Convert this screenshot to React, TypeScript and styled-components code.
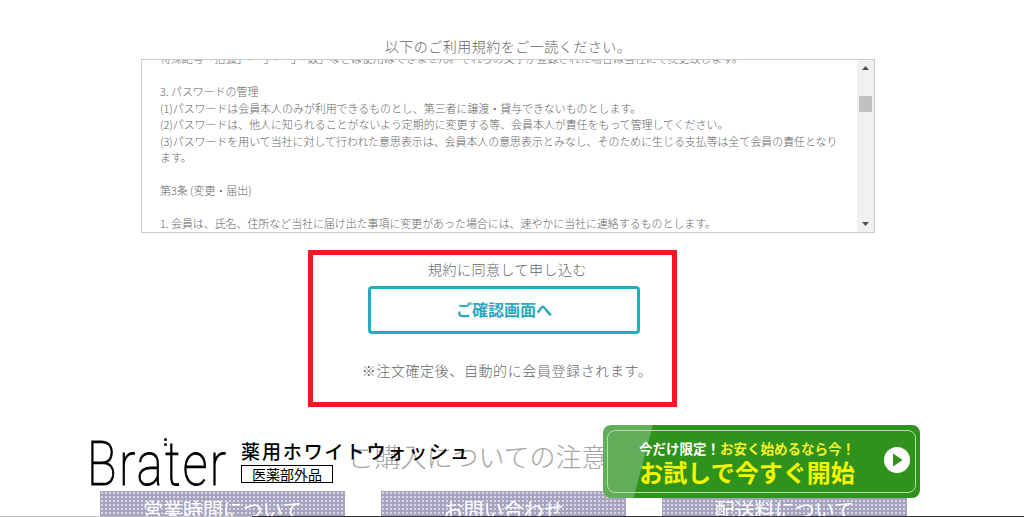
import styled, { createGlobalStyle } from "styled-components";

const GlobalStyle = createGlobalStyle`
    html, body {
        margin: 0;
        height: 517px;
        overflow: hidden;
        background: #fff;
    }
    body {
        font-family: "Noto Sans CJK JP", "Noto Sans", sans-serif;
        color: #666;
    }
`

const Page = styled.div`
    position: relative;
    width: 1024px;
    height: 517px;
    overflow: hidden;
`

const Main = styled.main`
    display: flex;
    flex-direction: column;
    align-items: center;
    width: 1008px;
    padding-top: 36px;
`

const Lead = styled.p`
    margin: 0 0 0 8px;
    height: 23px;
    font-size: 14px;
    font-weight: 300;
    line-height: 21px;
    letter-spacing: 0.5px;
    text-align: center;
`

const TermsBox = styled.div`
    display: flex;
    box-sizing: border-box;
    width: 734px;
    height: 174px;
    margin-left: 8px;
    border: 1px solid #ccc;
    background: #fff;
`

const TermsText = styled.div`
    flex: 1;
    overflow: hidden;
    padding-left: 18px;
    font-size: 10.93px;
    font-weight: 300;
    line-height: 16.5px;
`

const TermsInner = styled.div`
    margin-top: -10px;
`

const TermsLine = styled.div`
    min-height: 16.5px;
    white-space: nowrap;
`

const ScrollBar = styled.div`
    display: flex;
    flex-direction: column;
    align-items: center;
    width: 17px;
    background: #f1f1f1;
`

const ScrollArrow = styled.svg`
    display: block;
    flex: none;
    width: 17px;
    height: 17px;
`

const ScrollTrack = styled.div`
    flex: 1;
    width: 100%;
    padding-top: 19px;
    box-sizing: border-box;
`

const ScrollThumb = styled.div`
    width: 13px;
    height: 16px;
    margin: 0 auto;
    background: #c1c1c1;
`

const Agree = styled.p`
    margin: 26px 0 0 7px;
    font-size: 14px;
    font-weight: 300;
    line-height: 21px;
    letter-spacing: 0.5px;
`

const ConfirmButton = styled.button`
    display: block;
    box-sizing: border-box;
    width: 272px;
    height: 48px;
    margin-top: 6px;
    padding: 0 0 2px;
    border: 3px solid #20aec0;
    border-radius: 4px;
    background: #fff;
    color: #2ea7bd;
    font-family: inherit;
    font-size: 16px;
    font-weight: 700;
`

const Note = styled.p`
    margin: 26px 0 0 6px;
    font-size: 14px;
    font-weight: 300;
    line-height: 21px;
    letter-spacing: 0.6px;
`

const NoticeTitle = styled.h2`
    margin: 53px 0 0;
    height: 57px;
    color: #a6a6a6;
    font-size: 26px;
    font-weight: 300;
    line-height: 44px;
`

const InfoRow = styled.div`
    display: flex;
    gap: 36px;
    margin-right: 1px;
`

const InfoTab = styled.div`
    width: 245px;
    height: 60px;
    padding-top: 5px;
    box-sizing: border-box;
    background-color: #a5a3bf;
    background-image: radial-gradient(circle at center, #d8d7e4 1px, transparent 1.2px);
    background-size: 4px 4px;
    color: #fff;
    font-size: 20px;
    line-height: 28px;
    text-align: center;
`

/* annotation drawn on top of the capture */
const Highlight = styled.div`
    position: absolute;
    left: 308px;
    top: 250px;
    box-sizing: border-box;
    width: 369px;
    height: 157px;
    border: 5px solid #ed1c24;
`

const Brand = styled.div`
    position: absolute;
    left: 91px;
    top: 430px;
    display: flex;
    align-items: flex-start;
    color: #000;
`

const Logo = styled.div`
    position: relative;
    width: 137px;
    height: 60px;
`

const LogoText = styled.span`
    display: block;
    margin: 2px 0 0 -4px;
    font-family: Roboto, sans-serif;
    font-size: 62px;
    font-weight: 100;
    line-height: 64px;
    letter-spacing: 3px;
    white-space: nowrap;
    transform: scaleX(0.79);
    transform-origin: left top;
    -webkit-text-stroke: 1.1px #000;
`

const LogoDots = styled.i`
    position: absolute;
    left: 73px;
    top: 8px;
    width: 3px;
    height: 3px;
    border-radius: 50%;
    background: #000;
    box-shadow: 0 5px 0 #000;
`

const BrandCopy = styled.div`
    display: flex;
    flex-direction: column;
    align-items: flex-start;
    margin: 9px 0 0 13px;
`

const Product = styled.div`
    font-size: 19px;
    font-weight: 500;
    line-height: 24px;
    letter-spacing: 1.9px;
    white-space: nowrap;
`

const Quasi = styled.div`
    box-sizing: border-box;
    width: 92px;
    height: 18px;
    margin-top: 2px;
    border: 1px solid #000;
    font-size: 14px;
    line-height: 16px;
    text-align: center;
`

const TrialBanner = styled.a`
    position: absolute;
    left: 603px;
    top: 425px;
    box-sizing: border-box;
    display: flex;
    flex-direction: column;
    align-items: center;
    width: 317px;
    height: 73px;
    padding: 12px 29px 0 0;
    border-radius: 8px;
    overflow: hidden;
    background: linear-gradient(105deg, #62ae5b 0, #62ae5b 48px, #2f921c 48.5px, #2f921c 100%);
`

const BannerFrame = styled.span`
    position: absolute;
    inset: 5px 4px;
    border: 1px solid #b9d9ae;
    border-radius: 8px;
`

const BannerTop = styled.span`
    color: #fff;
    font-size: 13.5px;
    font-weight: 700;
    line-height: 22px;
    white-space: nowrap;
`

const BannerAccent = styled.span`
    color: #f5f02c;
`

const BannerMain = styled.span`
    margin-top: -2px;
    color: #f6f500;
    font-size: 24px;
    font-weight: 700;
    line-height: 30px;
    white-space: nowrap;
`

const PlayIcon = styled.svg`
    position: absolute;
    right: 10px;
    top: 22px;
    width: 26px;
    height: 26px;
`

const EdgeLine = styled.div`
    position: absolute;
    left: 0;
    right: 0;
    bottom: 0;
    height: 1px;
    background: linear-gradient(90deg, #bdbdbd 0, #bdbdbd 252px, #333 252px);
`

const terms = [
    "特殊記号「括弧」「ー」「・」「数」などは使用はできません。それらの文字が登録された場合は当社にて変更致します。",
    "",
    "3. パスワードの管理",
    "(1)パスワードは会員本人のみが利用できるものとし、第三者に譲渡・貸与できないものとします。",
    "(2)パスワードは、他人に知られることがないよう定期的に変更する等、会員本人が責任をもって管理してください。",
    "(3)パスワードを用いて当社に対して行われた意思表示は、会員本人の意思表示とみなし、そのために生じる支払等は全て会員の責任となり",
    "ます。",
    "",
    "第3条 (変更・届出)",
    "",
    "1. 会員は、氏名、住所など当社に届け出た事項に変更があった場合には、速やかに当社に連絡するものとします。",
]

const tabs = ["営業時間について", "お問い合わせ", "配送料について"]

export default function App() {
    return (
        <Page>
            <GlobalStyle/>
            <Main>
                <Lead>以下のご利用規約をご一読ください。</Lead>
                <TermsBox>
                    <TermsText>
                        <TermsInner>
                            {terms.map((line, i) => <TermsLine key={i}>{line}</TermsLine>)}
                        </TermsInner>
                    </TermsText>
                    <ScrollBar>
                        <ScrollArrow viewBox="0 0 17 17"><path d="M5 10h7L8.5 6z" fill="#505050"/></ScrollArrow>
                        <ScrollTrack><ScrollThumb/></ScrollTrack>
                        <ScrollArrow viewBox="0 0 17 17"><path d="M5 7h7l-3.5 4z" fill="#505050"/></ScrollArrow>
                    </ScrollBar>
                </TermsBox>
                <Agree>規約に同意して申し込む</Agree>
                <ConfirmButton>ご確認画面へ</ConfirmButton>
                <Note>※注文確定後、自動的に会員登録されます。</Note>
                <NoticeTitle>ご購入についての注意事項</NoticeTitle>
                <InfoRow>
                    {tabs.map(tab => <InfoTab key={tab}>{tab}</InfoTab>)}
                </InfoRow>
            </Main>
            <Highlight/>
            <Brand>
                <Logo>
                    <LogoText>Brater</LogoText>
                    <LogoDots/>
                </Logo>
                <BrandCopy>
                    <Product>薬用ホワイトウォッシュ</Product>
                    <Quasi>医薬部外品</Quasi>
                </BrandCopy>
            </Brand>
            <TrialBanner>
                <BannerFrame/>
                <BannerTop>今だけ限定！<BannerAccent>お安く始めるなら今！</BannerAccent></BannerTop>
                <BannerMain>お試しで今すぐ開始</BannerMain>
                <PlayIcon viewBox="0 0 26 26">
                    <circle cx="13" cy="13" r="13" fill="#fff"/>
                    <path d="M9 6.5v13L18.5 13z" fill="#2f921c"/>
                </PlayIcon>
            </TrialBanner>
            <EdgeLine/>
        </Page>
    )
}
